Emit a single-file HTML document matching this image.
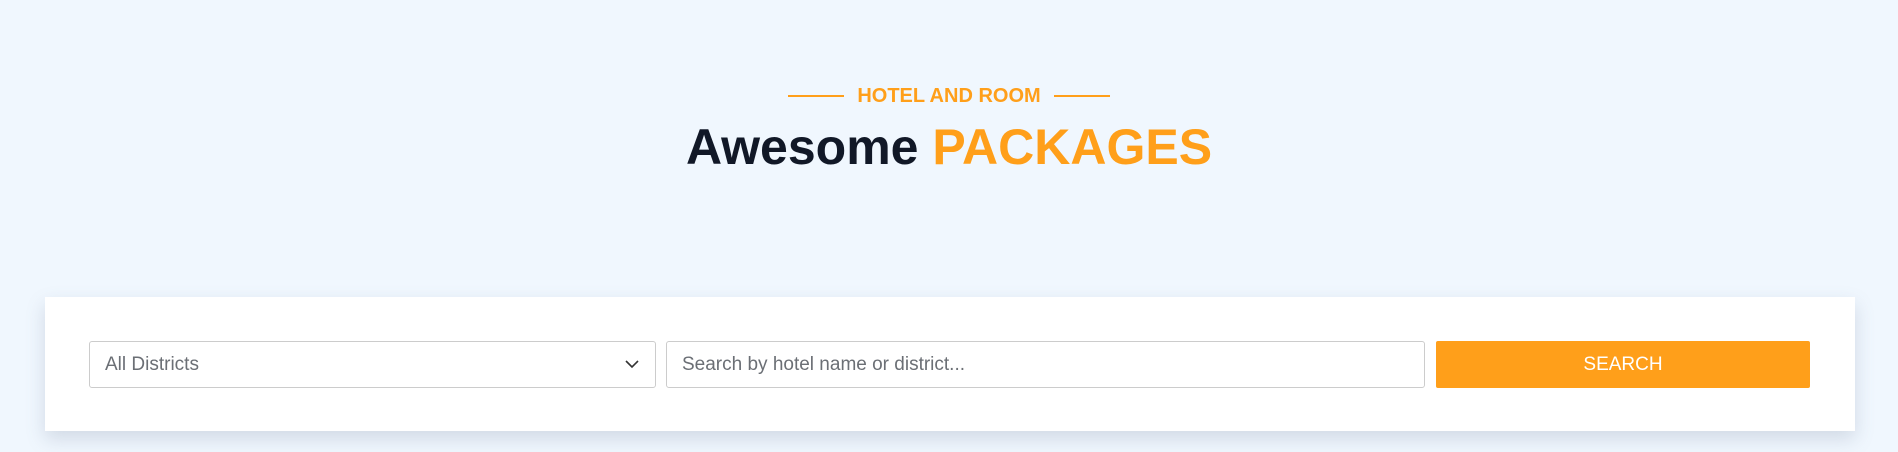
<!DOCTYPE html>
<html><head><style>
html,body{margin:0;padding:0}
body{width:1898px;height:452px;background:#f0f7fe;font-family:"Liberation Sans",sans-serif;position:relative;overflow:hidden}
.sub{position:absolute;top:83px;left:0;width:1898px;text-align:center;color:#ff9f1a;font-weight:bold;font-size:20px;line-height:24px}
.sub span{display:inline-block;vertical-align:middle}
.ln{width:56px;height:2px;background:#ff9f1a;margin:0 13px}
h1{position:absolute;top:115px;left:0;width:1898px;text-align:center;margin:0;font-size:50px;line-height:64px;color:#111827;font-weight:bold}
h1 b{color:#ff9f1a}
.card{position:absolute;left:45px;top:297px;width:1810px;height:134px;background:#fff;box-shadow:0 8px 18px rgba(100,116,139,.22)}
.sel,.inp{position:absolute;top:44px;height:47px;border:1px solid #ccc;border-radius:3px;box-sizing:border-box;font-size:19px;color:#6b6f75;line-height:45px;padding-left:15px}
.sel{left:44px;width:567px}
.inp{left:621px;width:759px}
.btn{position:absolute;left:1391px;top:44px;width:374px;height:47px;background:#ff9f1a;border-radius:2px;color:#fff;font-size:19px;line-height:47px;text-align:center}
.sel svg{position:absolute;right:16px;top:18px}
</style></head><body>
<div class="sub"><span class="ln"></span><span>HOTEL AND ROOM</span><span class="ln"></span></div>
<h1>Awesome <b>PACKAGES</b></h1>
<div class="card">
<div class="sel">All Districts<svg width="14" height="9" viewBox="0 0 14 9"><path d="M1 1l6 6 6-6" fill="none" stroke="#333" stroke-width="1.6"/></svg></div>
<div class="inp">Search by hotel name or district...</div>
<div class="btn">SEARCH</div>
</div>
</body></html>
